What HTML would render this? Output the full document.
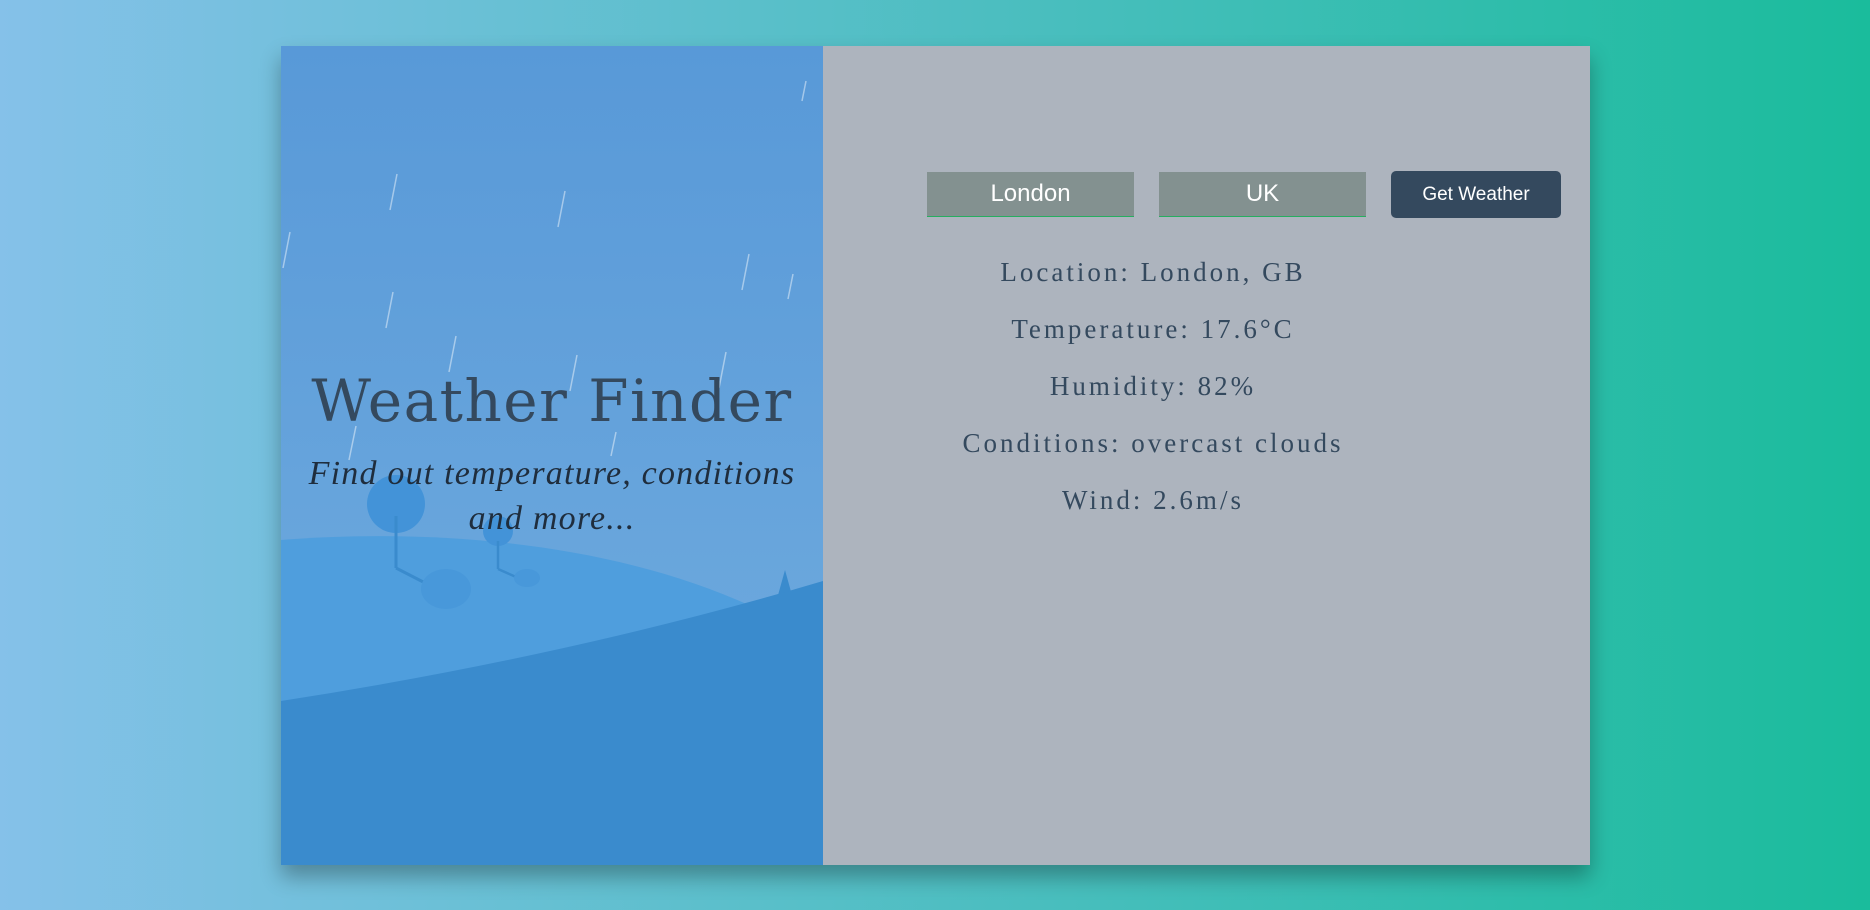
<!DOCTYPE html>
<html><head><meta charset="utf-8"><style>
html,body{margin:0;padding:0}
body{width:1870px;height:910px;overflow:hidden;background:linear-gradient(to right,#85c1e9,#1abc9c);position:relative;font-family:"Liberation Sans",sans-serif}
.card{position:absolute;left:281px;top:46px;width:1309px;height:819px;box-shadow:0 12px 20px rgba(0,0,0,.3)}
.left{position:absolute;left:0;top:0;width:542px;height:819px;overflow:hidden;background:linear-gradient(#5899d8,#72addf)}
.right{position:absolute;left:542px;top:0;width:767px;height:819px;background:#adb4be}
.title{position:absolute;left:0;width:542px;text-align:center;top:326px;font-family:"DejaVu Serif","Liberation Serif",serif;font-size:58px;color:#34495e;letter-spacing:1.5px;line-height:1;margin:0;font-weight:normal}
.sub{position:absolute;left:0;width:542px;text-align:center;top:405px;font-family:"Liberation Serif",serif;font-style:italic;font-size:34px;line-height:45px;color:#1f2d3d;letter-spacing:1.2px}
.inp{position:absolute;top:126px;width:207px;height:45px;background:#839190;border-bottom:1px solid #27ae60;color:#fff;font-size:24px;text-align:center;line-height:44px;box-sizing:border-box}
.btn{position:absolute;left:568px;top:125px;width:170px;height:47px;background:#34495e;border-radius:5px;color:#fff;font-size:19px;text-align:center;line-height:47px}
.t{position:absolute;left:330px;width:600px;margin-left:-300px;text-align:center;font-family:"Liberation Serif",serif;font-size:27px;color:#34495e;letter-spacing:3px;line-height:30px}
</style></head><body>
<div class="card">
<div class="left">
<svg width="542" height="819" style="position:absolute;left:0;top:0">
<g stroke="rgba(255,255,255,.45)" stroke-width="1.5">
<line x1="116" y1="128" x2="109" y2="164"/><line x1="284" y1="145" x2="277" y2="181"/>
<line x1="9" y1="186" x2="2" y2="222"/><line x1="468" y1="208" x2="461" y2="244"/>
<line x1="512" y1="228" x2="507" y2="253"/><line x1="112" y1="246" x2="105" y2="282"/>
<line x1="175" y1="290" x2="168" y2="326"/><line x1="296" y1="309" x2="289" y2="345"/>
<line x1="445" y1="306" x2="438" y2="342"/><line x1="525" y1="35" x2="521" y2="55"/>
<line x1="75" y1="380" x2="68" y2="414"/><line x1="335" y1="386" x2="330" y2="410"/>
</g>
<path d="M0,494 C150,482 330,496 470,560 L542,819 L0,819Z" fill="#4f9edd"/>
<circle cx="115" cy="458" r="29" fill="#4393d8"/>
<line x1="115" y1="470" x2="115" y2="522" stroke="#3a8bcd" stroke-width="3"/>
<line x1="115" y1="522" x2="150" y2="540" stroke="#3a8bcd" stroke-width="3"/>
<ellipse cx="165" cy="543" rx="25" ry="20" fill="#4898da"/>
<circle cx="217" cy="485" r="15" fill="#4393d8"/>
<line x1="217" y1="495" x2="217" y2="523" stroke="#3a8bcd" stroke-width="2.5"/>
<line x1="217" y1="523" x2="235" y2="531" stroke="#3a8bcd" stroke-width="2.5"/>
<ellipse cx="246" cy="532" rx="13" ry="9" fill="#4898da"/>
<path d="M494,560 L504,524 L514,560Z" fill="#3a8bcd"/>
<path d="M0,655 Q290,610 542,535 L542,819 L0,819Z" fill="#3a8bcd"/>
</svg>
<h1 class="title">Weather Finder</h1>
<div class="sub">Find out temperature, conditions<br>and more...</div>
</div>
<div class="right">
<div class="inp" style="left:104px">London</div>
<div class="inp" style="left:336px">UK</div>
<div class="btn">Get Weather</div>
<div class="t" style="top:211px">Location: London, GB</div>
<div class="t" style="top:268px">Temperature: 17.6°C</div>
<div class="t" style="top:325px">Humidity: 82%</div>
<div class="t" style="top:382px">Conditions: overcast clouds</div>
<div class="t" style="top:439px">Wind: 2.6m/s</div>
</div>
</div>
</body></html>
